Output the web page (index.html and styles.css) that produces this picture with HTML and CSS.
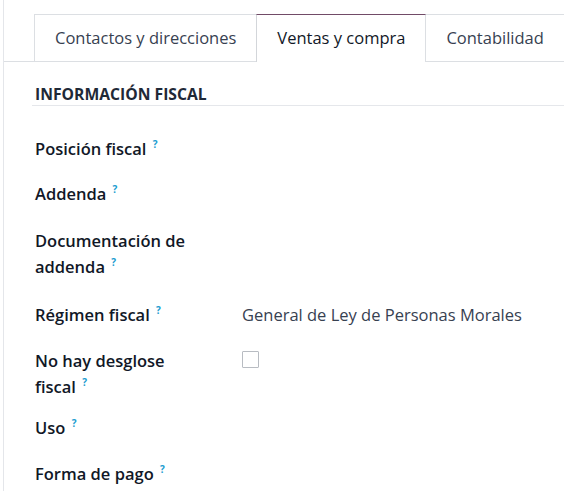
FILE: index.html
```html
<!DOCTYPE html>
<html lang="es">
<head>
<meta charset="utf-8">
<title>Ventas y compra</title>
<link rel="stylesheet" href="styles.css">
</head>
<body>
<div class="sheet">
  <nav class="tabs">
    <div class="tab">Contactos y direcciones</div>
    <div class="tab active">Ventas y compra</div>
    <div class="tab">Contabilidad</div>
  </nav>
  <section class="group">
    <h2 class="separator">Información fiscal</h2>
    <div class="form">
      <div class="row">
        <div class="label">Posición fiscal <sup class="help">?</sup></div>
        <div class="value"></div>
      </div>
      <div class="row gap-19">
        <div class="label">Addenda <sup class="help">?</sup></div>
        <div class="value"></div>
      </div>
      <div class="row gap-21">
        <div class="label">Documentación de addenda <sup class="help">?</sup></div>
        <div class="value"></div>
      </div>
      <div class="row gap-22">
        <div class="label">Régimen fiscal <sup class="help">?</sup></div>
        <div class="value text">General de Ley de Personas Morales</div>
      </div>
      <div class="row gap-20">
        <div class="label">No hay desglose fiscal <sup class="help">?</sup></div>
        <div class="value"><span class="checkbox"></span></div>
      </div>
      <div class="row gap-15">
        <div class="label">Uso <sup class="help">?</sup></div>
        <div class="value"></div>
      </div>
      <div class="row gap-20">
        <div class="label">Forma de pago <sup class="help">?</sup></div>
        <div class="value"></div>
      </div>
    </div>
  </section>
</div>
</body>
</html>
```
FILE: styles.css
```css
html, body {
  margin: 0;
  padding: 0;
  background: #ffffff;
}
body {
  font-family: "Open Sans", "Noto Sans", sans-serif;
  font-size: 16.5px;
  line-height: 26px;
  color: #111827;
  overflow: hidden;
}
.sheet {
  margin-left: 3px;
  border-left: 1px solid #e4e6ea;
  min-height: 100vh;
}
.tabs {
  display: flex;
  padding-top: 14px;
  padding-left: 31px;
  border-bottom: 1px solid #dcdfe3;
}
.tab {
  flex: none;
  line-height: 44px;
  padding: 1px 20px 0 20px;
  box-sizing: content-box;
  height: 45px;
  border: 1px solid #dcdfe3;
  border-bottom: none;
  margin-left: -1px;
  color: #374151;
  white-space: nowrap;
  background: #ffffff;
}
.tab.active {
  color: #111827;
  border-top-color: #714b67;
  border-left-color: #d3d6da;
  height: 46px;
  margin-bottom: -1px;
  position: relative;
}
.group {
  padding-left: 28px;
}
.separator {
  margin: 21px 0 0 0;
  padding: 0 0 0 3px;
  font-size: 15.7px;
  line-height: 22px;
  font-weight: 700;
  text-transform: uppercase;
  color: #1f2937;
  border-bottom: 1px solid #e5e7eb;
}
.form {
  display: flex;
  flex-direction: column;
  padding: 30px 0 0 3px;
}
.row {
  display: grid;
  grid-template-columns: 207px 1fr;
}
.gap-15 { margin-top: 15px; }
.gap-19 { margin-top: 19px; }
.gap-20 { margin-top: 20px; }
.gap-21 { margin-top: 21px; }
.gap-22 { margin-top: 22px; }
.label {
  font-weight: 600;
  width: 172px;
  color: #111827;
}
.help {
  display: inline-block;
  font-size: 10px;
  line-height: 10px;
  vertical-align: top;
  margin: 3px 0 0 2px;
  color: #1a9cd0;
  font-weight: 700;
}
.value.text {
  color: #374151;
}
.checkbox {
  display: block;
  margin-top: 3px;
  width: 15px;
  height: 15px;
  border: 1px solid #b8bcc2;
  border-radius: 1px;
  background: #ffffff;
}
```
